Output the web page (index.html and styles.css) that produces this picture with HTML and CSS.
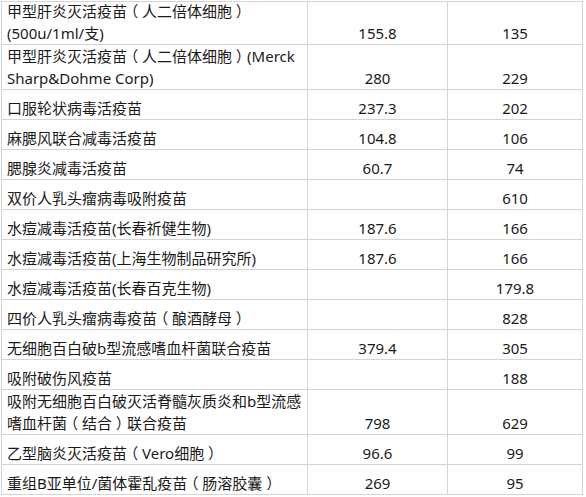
FILE: index.html
```html
<!DOCTYPE html>
<html lang="zh-CN">
<head>
<meta charset="utf-8">
<title>疫苗价格表</title>
<link rel="stylesheet" href="styles.css">
</head>
<body>
<div class="sheet">
  <div class="c name"><span>甲型肝炎灭活疫苗<span class="lp">（</span>人二倍体细胞<span class="rp">）</span></span><span>(500u/1ml/支)</span></div><div class="c num">155.8</div><div class="c num">135</div>
  <div class="c name"><span>甲型肝炎灭活疫苗<span class="lp">（</span>人二倍体细胞<span class="rp">）</span>(Merck</span><span>Sharp&amp;Dohme Corp)</span></div><div class="c num">280</div><div class="c num">229</div>
  <div class="c name">口服轮状病毒活疫苗</div><div class="c num">237.3</div><div class="c num">202</div>
  <div class="c name">麻腮风联合减毒活疫苗</div><div class="c num">104.8</div><div class="c num">106</div>
  <div class="c name">腮腺炎减毒活疫苗</div><div class="c num">60.7</div><div class="c num">74</div>
  <div class="c name">双价人乳头瘤病毒吸附疫苗</div><div class="c num"></div><div class="c num">610</div>
  <div class="c name">水痘减毒活疫苗(长春祈健生物)</div><div class="c num">187.6</div><div class="c num">166</div>
  <div class="c name">水痘减毒活疫苗(上海生物制品研究所)</div><div class="c num">187.6</div><div class="c num">166</div>
  <div class="c name">水痘减毒活疫苗(长春百克生物)</div><div class="c num"></div><div class="c num">179.8</div>
  <div class="c name"><span>四价人乳头瘤病毒疫苗<span class="lp">（</span>酿酒酵母<span class="rp">）</span></span></div><div class="c num"></div><div class="c num">828</div>
  <div class="c name">无细胞百白破b型流感嗜血杆菌联合疫苗</div><div class="c num">379.4</div><div class="c num">305</div>
  <div class="c name">吸附破伤风疫苗</div><div class="c num"></div><div class="c num">188</div>
  <div class="c name"><span>吸附无细胞百白破灭活脊髓灰质炎和b型流感</span><span>嗜血杆菌<span class="lp">（</span>结合<span class="rp">）</span>联合疫苗</span></div><div class="c num">798</div><div class="c num">629</div>
  <div class="c name"><span>乙型脑炎灭活疫苗<span class="lp">（</span>Vero细胞<span class="rp">）</span></span></div><div class="c num">96.6</div><div class="c num">99</div>
  <div class="c name"><span>重组B亚单位/菌体霍乱疫苗<span class="lp">（</span>肠溶胶囊<span class="rp">）</span></span></div><div class="c num">269</div><div class="c num">95</div>
</div>
</body>
</html>
```

FILE: styles.css
```css
html, body {
  margin: 0;
  padding: 0;
  background: #ffffff;
}

.sheet {
  margin: 1px 0 0 1px;
  width: 580px;
  padding: 1px;
  display: grid;
  grid-template-columns: 305px 139px 134px;
  grid-template-rows: 42px 44px repeat(10, 29px) 44px 29px 29px;
  gap: 1px;
  background: #d4d4d4;
  font-family: "Noto Sans", "Noto Sans CJK SC", sans-serif;
  font-size: 15px;
  line-height: 22px;
  color: #1a1a1a;
}

.c {
  background: #ffffff;
  display: flex;
  flex-direction: column;
  justify-content: flex-end;
  white-space: nowrap;
  overflow: hidden;
  padding-bottom: 0;
}

.name {
  padding-left: 5px;
  align-items: flex-start;
}

.num {
  align-items: center;
}

.lp,
.rp {
  display: inline-block;
  font-feature-settings: "halt";
  padding: 0 0.25em;
}
```
